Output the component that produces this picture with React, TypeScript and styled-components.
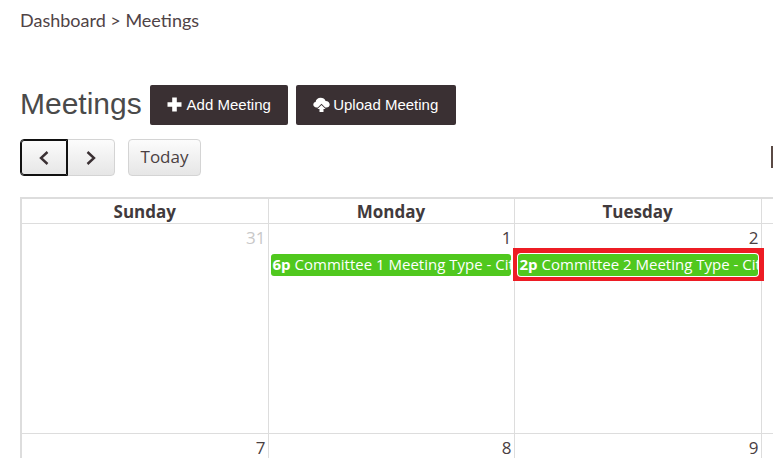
import React from 'react';
import styled, { createGlobalStyle } from 'styled-components';

const GlobalStyle = createGlobalStyle`
    html, body {
        margin: 0;
        padding: 0;
        width: 773px;
        height: 458px;
        overflow: hidden;
        background: #fff;
    }
`;

const Page = styled.div`
    width: 1780px;
    height: 458px;
    padding: 9px 0 0 20px;
    box-sizing: border-box;
    overflow: hidden;
`;

const Breadcrumb = styled.div`
    font-family: 'Lato', sans-serif;
    font-size: 18px;
    line-height: 22px;
    color: #4f4346;
`;

const TitleRow = styled.div`
    display: flex;
    align-items: center;
    margin-top: 54px;
    height: 40px;
`;

const Title = styled.h1`
    margin: 0 8px 0 0;
    padding-bottom: 3px;
    font-family: 'Liberation Sans', sans-serif;
    font-weight: 400;
    font-size: 30px;
    line-height: 37px;
    color: #4a4a4a;
`;

const ActionButton = styled.button<{ $width: number }>`
    display: flex;
    align-items: center;
    justify-content: center;
    gap: 3px;
    height: 40px;
    width: ${(p) => p.$width}px;
    margin-right: 8px;
    padding: 0 0 1px;
    border: none;
    border-radius: 2px;
    background: #3a3033;
    color: #fff;
    font-family: 'Liberation Sans', sans-serif;
    font-size: 15px;
`;

const Toolbar = styled.div`
    display: flex;
    align-items: center;
    margin-top: 14px;
    height: 37px;
`;

const NavButton = styled.button<{ $focused?: boolean; $side: 'left' | 'right' }>`
    display: flex;
    align-items: center;
    justify-content: center;
    box-sizing: border-box;
    width: 48px;
    height: 37px;
    padding: 0;
    margin-left: ${(p) => (p.$side === 'right' ? -1 : 0)}px;
    border: 1px solid ${(p) => (p.$focused ? '#111' : '#d4d4d4')};
    outline: ${(p) => (p.$focused ? '1px solid #111' : 'none')};
    outline-offset: -2px;
    position: ${(p) => (p.$focused ? 'relative' : 'static')};
    z-index: ${(p) => (p.$focused ? 1 : 0)};
    border-radius: ${(p) => (p.$side === 'left' ? '4px 0 0 4px' : '0 4px 4px 0')};
    background: linear-gradient(#fcfcfc, #e6e6e6);
`;

const TodayButton = styled.button`
    box-sizing: border-box;
    width: 73px;
    height: 37px;
    margin-left: 13px;
    padding: 0 0 2px;
    border: 1px solid #d4d4d4;
    border-radius: 4px;
    background: linear-gradient(#fcfcfc, #e6e6e6);
    font-family: 'Open Sans', sans-serif;
    font-size: 17px;
    color: #4a4042;
`;

const ViewTitle = styled.div`
    width: 3px;
    height: 22px;
    margin: 0 0 1px 570px;
    background: #5a4a45;
`;

const Calendar = styled.div`
    width: 1730px;
    margin-top: 21px;
    border-top: 2px solid #ddd;
    border-left: 2px solid #ddd;
    box-sizing: border-box;
    display: grid;
    grid-template-columns: 246.5px 246px 247px repeat(4, 246.5px);
    grid-template-rows: 25px 210px 120px;
`;

const HeadCell = styled.div`
    border-right: 1px solid #ddd;
    border-bottom: 1px solid #ddd;
    font-family: 'Open Sans', sans-serif;
    font-weight: 700;
    font-size: 17px;
    line-height: 25px;
    text-align: center;
    color: #413a3c;
`;

const DayCell = styled.div`
    border-right: 1px solid #ddd;
    border-bottom: 1px solid #ddd;
    font-family: 'Open Sans', sans-serif;
`;

const DayNumber = styled.div<{ $muted?: boolean }>`
    padding: 3px 2px 0 0;
    font-size: 17px;
    line-height: 22px;
    text-align: right;
    color: ${(p) => (p.$muted ? '#c8c8c8' : '#4a4042')};
`;

const EventHighlight = styled.div<{ $selected?: boolean }>`
    padding: ${(p) => (p.$selected ? '5px 5px 4px 4px' : '0')};
    background: ${(p) => (p.$selected ? '#ed1c24' : 'transparent')};
    margin: ${(p) => (p.$selected ? '-1px -3px 0 -2px' : '5px 2px 0 1px')};
`;

const EventChip = styled.div`
    height: 22px;
    padding: 0 2px;
    border-radius: 3px;
    background: #50c81e;
    box-shadow: 0 0 0 1px #fff;
    color: #fff;
    font-size: 15px;
    line-height: 21px;
    white-space: nowrap;
    overflow: hidden;
    margin: 1px;
`;

const EventTime = styled.b`
    font-weight: 700;
    margin-right: 4px;
`;

const weekdays = ['Sunday', 'Monday', 'Tuesday', 'Wednesday', 'Thursday', 'Friday', 'Saturday'];
const firstWeek = ['31', '1', '2', '3', '4', '5', '6'];
const secondWeek = ['7', '8', '9', '10', '11', '12', '13'];

const ChevronLeft = () => (
    <svg width="12" height="16" viewBox="0 0 12 16">
        <path d="M9.5 2 L3 8 L9.5 14" fill="none" stroke="#3a3033" strokeWidth="2.4" />
    </svg>
);

const ChevronRight = () => (
    <svg width="12" height="16" viewBox="0 0 12 16">
        <path d="M2.5 2 L9 8 L2.5 14" fill="none" stroke="#3a3033" strokeWidth="2.4" />
    </svg>
);

const PlusIcon = () => (
    <svg width="17" height="15" viewBox="0 0 17 15">
        <path d="M5.2 0.5 H9.8 V5.2 H14.5 V9.8 H9.8 V14.5 H5.2 V9.8 H0.5 V5.2 H5.2 Z" fill="#fff" />
    </svg>
);

const UploadIcon = () => (
    <svg width="17" height="15" viewBox="0 0 17 15">
        <path
            d="M4.8 10.5 H3.6 C1.6 10.5 0.3 9.2 0.3 7.6 C0.3 6.2 1.3 5.2 2.6 5 C2.8 2.6 5 0.8 7.6 0.8 C10 0.8 11.8 2 12.6 4 C14.9 3.9 16.7 5.5 16.7 7.5 C16.7 9.2 15.4 10.5 13.4 10.5 H12.2 L8.5 6.8 Z"
            fill="#fff"
        />
        <path d="M8.5 8 L12.6 12 H10.5 V15 H6.5 V12 H4.4 Z" fill="#fff" />
    </svg>
);

const Event: React.FC<{ time: string; label: string; selected?: boolean }> = ({ time, label, selected }) => (
    <EventHighlight $selected={selected}>
        <EventChip>
            <EventTime>{time}</EventTime>
            {label}
        </EventChip>
    </EventHighlight>
);

export default function App() {
    return (
        <Page>
            <GlobalStyle />
            <Breadcrumb>Dashboard &gt; Meetings</Breadcrumb>
            <TitleRow>
                <Title>Meetings</Title>
                <ActionButton $width={138}>
                    <PlusIcon />
                    Add Meeting
                </ActionButton>
                <ActionButton $width={160}>
                    <UploadIcon />
                    Upload Meeting
                </ActionButton>
            </TitleRow>
            <Toolbar>
                <NavButton $side="left" $focused>
                    <ChevronLeft />
                </NavButton>
                <NavButton $side="right">
                    <ChevronRight />
                </NavButton>
                <TodayButton>Today</TodayButton>
                <ViewTitle />
            </Toolbar>
            <Calendar>
                {weekdays.map((day) => (
                    <HeadCell key={day}>{day}</HeadCell>
                ))}
                {firstWeek.map((num, i) => (
                    <DayCell key={num}>
                        <DayNumber $muted={i === 0}>{num}</DayNumber>
                        {i === 1 && <Event time="6p" label="Committee 1 Meeting Type - City Council" />}
                        {i === 2 && <Event time="2p" label="Committee 2 Meeting Type - City Council" selected />}
                    </DayCell>
                ))}
                {secondWeek.map((num) => (
                    <DayCell key={num}>
                        <DayNumber>{num}</DayNumber>
                    </DayCell>
                ))}
            </Calendar>
        </Page>
    );
}
